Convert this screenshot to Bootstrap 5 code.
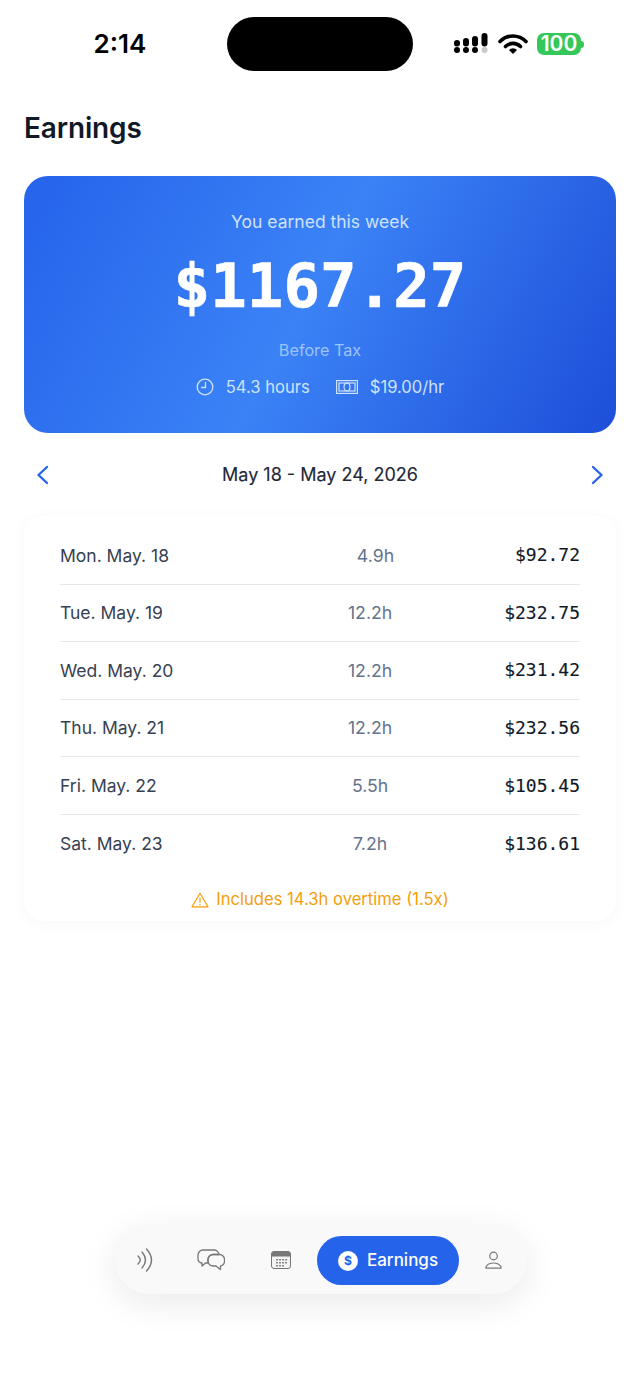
<!DOCTYPE html>
<html lang="en">
<head>
<meta charset="utf-8">
<title>Earnings</title>
<link href="https://cdn.jsdelivr.net/npm/bootstrap@5.3.0/dist/css/bootstrap.min.css" rel="stylesheet">
<style>
html,body{height:100%}
body{font-family:Inter,"Liberation Sans",sans-serif;background:#fff;color:#111827;}
.app-shell{width:640px;height:1387px;overflow:hidden}
.status-zone{height:88px;padding-top:17px}
.clock{width:227px;height:54px;font-size:26px;font-weight:600;color:#000;padding-left:13px;line-height:53px;text-align:center}
.island{width:186px;height:54px;border-radius:27px;background:#000}
.status-icons{padding-left:41px;gap:10px;height:54px}
.batt{width:44px;height:22px;border-radius:7px;background:#34c759;color:#fff;font-size:21px;font-weight:600;line-height:22px;text-align:center;letter-spacing:-.1px}
.batt-wrap{margin-left:-1px}
.batt-tip{width:3px;height:7px;background:#34c759;border-radius:0 3px 3px 0}
.page-title{font-size:27.9px;font-weight:600;color:#111827;line-height:34px;margin:23px 0 31px 24px;letter-spacing:-.1px}
.hero{margin:0 24px;height:257px;border-radius:24px;background:linear-gradient(118deg,#2563eb 0%,#3b82f6 48%,#1d4ed8 100%);color:#fff;padding-top:34px;text-align:center}
.hero-label{font-size:17.5px;line-height:24px;color:#cfe2fe}
.hero-amount{font-family:"DejaVu Sans Mono",monospace;font-weight:700;font-size:60.8px;line-height:72px;margin-top:16px;-webkit-text-stroke:.6px #fff}
.hero-sub{font-size:16.2px;line-height:20px;color:#9cc4fb;margin-top:18px}
.hero-meta{font-size:16.6px;line-height:20px;color:#cfe2fe;margin-top:17px;gap:26px}
.hero-meta svg{margin-right:12px}
.week-nav{margin:0 24px;height:83px;padding:0 12px 0}
.week-label{font-size:18px;font-weight:400;color:#1f2937;-webkit-text-stroke:.15px #1f2937}
.tile{margin:0 24px;height:405px;border-radius:20px;background:#fff;box-shadow:0 2px 16px rgba(0,0,0,.035);padding:11px 36px 0}
.day-row{height:57.6px;border-bottom:1px solid #e5e7eb;font-size:17.5px;padding-top:1px}
.day-row.no-rule{border-bottom:0}
.day-name{width:176px;color:#374151}
.day-hours{color:#64748b;text-align:center;font-size:17.7px}
.day-pay{font-family:"DejaVu Sans Mono",monospace;font-size:18px;font-weight:500;color:#111827;-webkit-text-stroke:.12px #111827;margin-top:-2px}
.ot-note{font-size:16.6px;color:#f59e0b;height:52px;padding-top:2px;gap:7px}
.dock-wrap{padding-bottom:93px}
.dock{width:412px;height:68px;border-radius:34px;background:#f9f9f9;box-shadow:0 8px 36px rgba(0,0,0,.09);padding:0 25px 0 0;margin-left:115px}
.dock-pill{height:49px;border-radius:25px;background:#2563eb;color:#fff;width:142px;font-size:17px;font-weight:500;gap:9px;margin-left:2px;padding-top:1px}
.coin{width:20px;height:20px;border-radius:50%;background:#fff;color:#2563eb;font-size:12px;font-weight:700;line-height:20px;text-align:center}
.slot-a{width:60px}.slot-b{width:72px}.slot-c{width:68px}
</style>
</head>
<body>
<div class="app-shell d-flex flex-column">
  <div class="status-zone d-flex align-items-start">
    <div class="clock">2:14</div>
    <div class="island"></div>
    <div class="status-icons d-flex align-items-center">
      <svg width="34" height="22" viewBox="0 0 34 22" fill="#000"><circle cx="3" cy="17" r="3"/><circle cx="12" cy="17" r="3"/><circle cx="21" cy="17" r="3"/><circle cx="30.500" cy="17" r="3" fill="#c8c8c8"/><rect x="0" y="7" width="6" height="6.500" rx="3"/><rect x="9" y="5" width="6" height="8.500" rx="3"/><rect x="18" y="3" width="6" height="10.500" rx="3"/><rect x="27.500" y="0" width="6" height="13.500" rx="3"/></svg>
      <svg width="30" height="22" viewBox="0 0 30 22" fill="none" stroke="#000" stroke-width="3.600" stroke-linecap="round"><path d="M2 8.500a18 18 0 0 1 26 0"/><path d="M7.500 13.500a10.500 10.500 0 0 1 15 0"/><path d="M15 21l-4-4a5.500 5.500 0 0 1 8 0z" fill="#000" stroke="none"/></svg>
      <div class="batt-wrap d-flex align-items-center"><div class="batt">100</div><div class="batt-tip"></div></div>
    </div>
  </div>
  <div class="page-title">Earnings</div>
  <div class="hero">
    <div class="hero-label">You earned this week</div>
    <div class="hero-amount">$1167.27</div>
    <div class="hero-sub">Before Tax</div>
    <div class="hero-meta d-flex justify-content-center align-items-center">
      <span class="d-inline-flex align-items-center"><svg width="18" height="18" viewBox="0 0 18 18" fill="none" stroke="#cfe2fe" stroke-width="1.300" stroke-linecap="round"><circle cx="9" cy="9" r="7.800"/><path d="M9.500 4.500V9.500H5.500"/></svg>54.3 hours</span>
      <span class="d-inline-flex align-items-center"><svg width="22" height="14" viewBox="0 0 22 14" fill="none" stroke="#cfe2fe" stroke-width="1.200"><rect x=".6" y=".6" width="20.800" height="12.800"/><rect x="3" y="3" width="16" height="8"/><ellipse cx="11" cy="7" rx="3" ry="4"/></svg>$19.00/hr</span>
    </div>
  </div>
  <div class="week-nav d-flex justify-content-between align-items-center">
    <svg width="13" height="20" viewBox="0 0 13 20" fill="none" stroke="#2563eb" stroke-width="2.400" stroke-linecap="round" stroke-linejoin="round"><path d="M11 2L2.500 10 11 18"/></svg>
    <div class="week-label">May 18 - May 24, 2026</div>
    <svg width="13" height="20" viewBox="0 0 13 20" fill="none" stroke="#2563eb" stroke-width="2.400" stroke-linecap="round" stroke-linejoin="round"><path d="M2 2L10.500 10 2 18"/></svg>
  </div>
  <div class="tile">
    <div class="day-row d-flex align-items-center"><div class="day-name">Mon. May. 18</div><div class="day-hours flex-grow-1">4.9h</div><div class="day-pay">$92.72</div></div>
    <div class="day-row d-flex align-items-center"><div class="day-name">Tue. May. 19</div><div class="day-hours flex-grow-1">12.2h</div><div class="day-pay">$232.75</div></div>
    <div class="day-row d-flex align-items-center"><div class="day-name">Wed. May. 20</div><div class="day-hours flex-grow-1">12.2h</div><div class="day-pay">$231.42</div></div>
    <div class="day-row d-flex align-items-center"><div class="day-name">Thu. May. 21</div><div class="day-hours flex-grow-1">12.2h</div><div class="day-pay">$232.56</div></div>
    <div class="day-row d-flex align-items-center"><div class="day-name">Fri. May. 22</div><div class="day-hours flex-grow-1">5.5h</div><div class="day-pay">$105.45</div></div>
    <div class="day-row no-rule d-flex align-items-center"><div class="day-name">Sat. May. 23</div><div class="day-hours flex-grow-1">7.2h</div><div class="day-pay">$136.61</div></div>
    <div class="ot-note d-flex justify-content-center align-items-center">
      <svg width="18" height="16" viewBox="0 0 18 16" fill="none" stroke="#f59e0b" stroke-width="1.200" stroke-linejoin="round" stroke-linecap="round"><path d="M9 1.200L1 14.800H17z"/><path d="M9 6v4.500M9 12.600v.2"/></svg>
      <span>Includes 14.3h overtime (1.5x)</span>
    </div>
  </div>
  <div class="mt-auto dock-wrap">
    <div class="dock d-flex align-items-center">
      <div class="slot-a d-flex justify-content-center"><svg width="16" height="24" viewBox="0 0 16 24" fill="none" stroke="#777" stroke-width="1.400" stroke-linecap="round"><path d="M1 8q4.500 4 0 8"/><path d="M5 4q7 8 0 16"/><path d="M9.500 1q10 11 0 22"/></svg></div>
      <div class="slot-b d-flex justify-content-center"><svg width="28" height="24" viewBox="0 0 28 24" fill="none" stroke="#777" stroke-width="1.300" stroke-linejoin="round"><path d="M6 2h11a5 5 0 0 1 5 4.500H16a5 5 0 0 0-5 5v3.500H8.500L5 18v-3a4.500 4.500 0 0 1-4-4.500V7a5 5 0 0 1 5-5z"/><path d="M16 6.500h6.500a5 5 0 0 1 5 5v2a5 5 0 0 1-4 4.500v3.500L19 18h-3a5 5 0 0 1-5-5v-1.500a5 5 0 0 1 5-5z"/></svg></div>
      <div class="slot-c d-flex justify-content-center"><svg width="20" height="18" viewBox="0 0 20 18"><rect x=".5" y=".5" width="19" height="17" rx="2.500" fill="#f3f3f3" stroke="#777"/><path d="M.5 3a2.500 2.500 0 0 1 2.500-2.500h14a2.500 2.500 0 0 1 2.500 2.500v2.500H.5z" fill="#777"/><g fill="#888"><rect x="5" y="8" width="2" height="1.500"/><rect x="8" y="8" width="2" height="1.500"/><rect x="11" y="8" width="2" height="1.500"/><rect x="14" y="8" width="2" height="1.500"/><rect x="5" y="11" width="2" height="1.500"/><rect x="8" y="11" width="2" height="1.500"/><rect x="11" y="11" width="2" height="1.500"/><rect x="14" y="11" width="2" height="1.500"/><rect x="5" y="14" width="2" height="1.500"/><rect x="8" y="14" width="2" height="1.500"/><rect x="11" y="14" width="2" height="1.500"/></g></svg></div>
      <div class="dock-pill d-flex justify-content-center align-items-center"><span class="coin">$</span><span>Earnings</span></div>
      <div class="d-flex justify-content-end flex-grow-1"><svg width="17" height="18" viewBox="0 0 17 18" fill="none" stroke="#777" stroke-width="1.200" stroke-linejoin="round"><circle cx="8.500" cy="5" r="3.800"/><path d="M1 16.500a2 2 0 0 1 .5-1.500c1.500-2 4.500-3 7-3s5.500 1 7 3a2 2 0 0 1 .5 1.500v.7H1z"/></svg></div>
    </div>
  </div>
</div>
<script src="https://cdn.jsdelivr.net/npm/bootstrap@5.3.0/dist/js/bootstrap.bundle.min.js"></script>
</body>
</html>
